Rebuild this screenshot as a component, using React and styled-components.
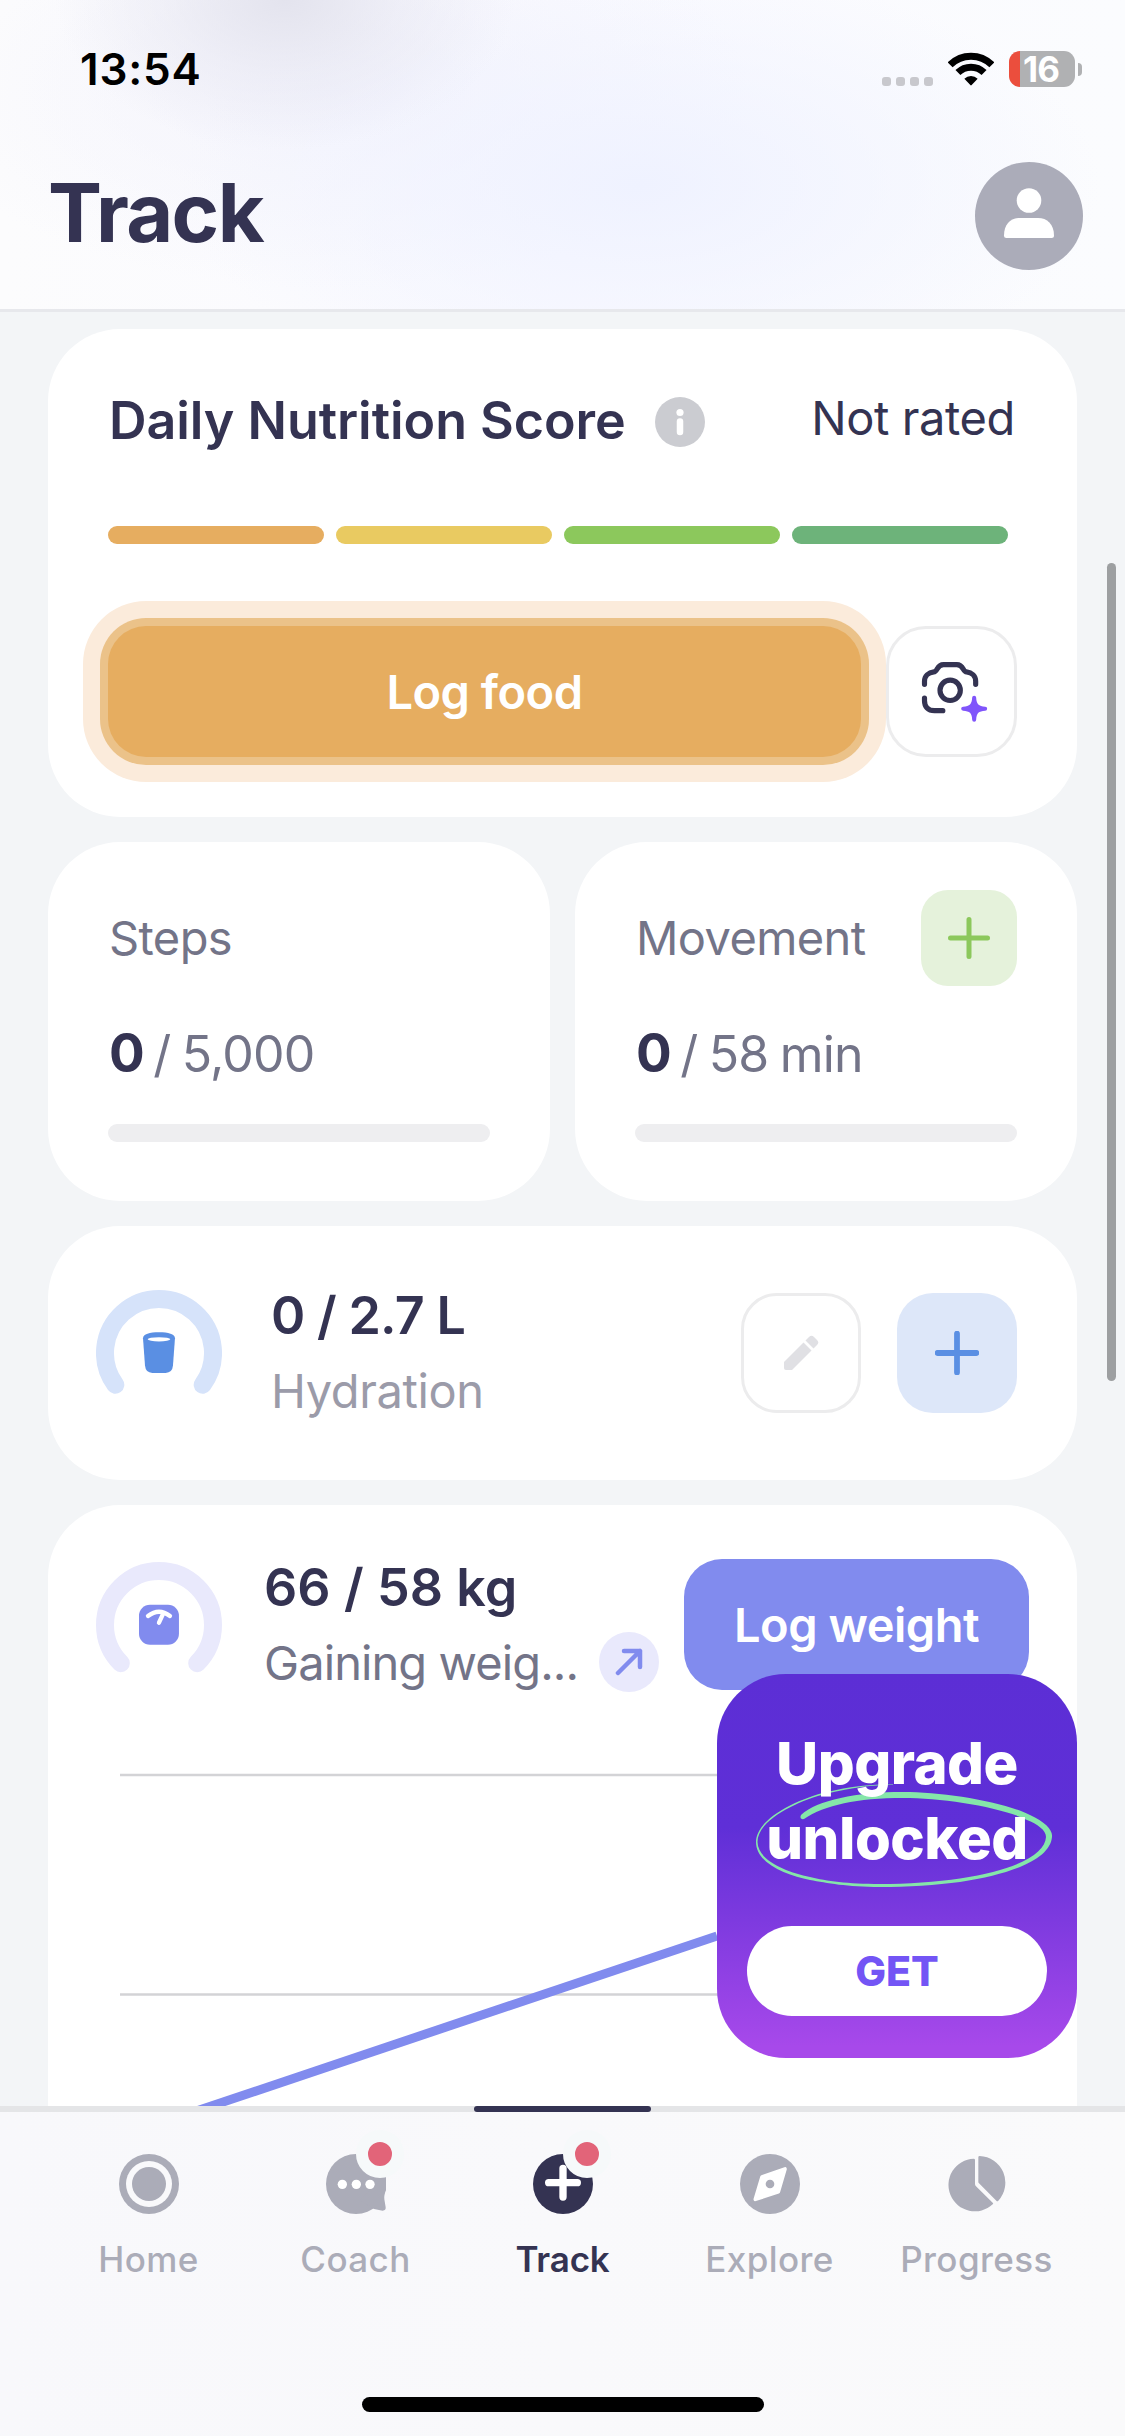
import React from 'react';
import styled, { createGlobalStyle } from 'styled-components';

const GlobalStyle = createGlobalStyle`
  * {
    box-sizing: border-box;
  }
  body {
    margin: 0;
    background-color: #f3f5f7;
    font-family: 'Inter', 'Liberation Sans', sans-serif;
    color: #343352;
  }
  svg {
    display: block;
    flex-shrink: 0;
  }
  button {
    border: none;
    padding: 0;
    font-family: inherit;
  }
`;

const Screen = styled.div`
  position: relative;
  display: flex;
  flex-direction: column;
  width: 1125px;
  height: 2436px;
  overflow: hidden;
`;

/* ---------- header ---------- */

const HeaderStyles = styled.header`
  height: 312px;
  border-bottom: 3px solid #e7e8ec;
  background: radial-gradient(
      ellipse 230px 150px at 285px 0,
      rgba(224, 224, 235, 0.85),
      rgba(226, 226, 238, 0.4) 50%,
      rgba(230, 230, 242, 0)
    ),
    radial-gradient(
      ellipse 460px 220px at 640px 185px,
      rgba(239, 242, 255, 1),
      rgba(239, 242, 255, 0)
    ),
    radial-gradient(
      ellipse 420px 200px at 330px 90px,
      rgba(243, 243, 252, 0.9),
      rgba(243, 243, 252, 0)
    ),
    linear-gradient(90deg, #fcfcfd, #fafaff 50%, #fbfcfe);

  .status {
    display: flex;
    align-items: center;
    height: 138px;
    padding: 0 43px 0 80px;
  }
  .time {
    flex: 1;
    font-size: 44px;
    font-weight: 600;
    letter-spacing: 0.8px;
    color: #000;
  }
  .title-row {
    display: flex;
    align-items: center;
    justify-content: space-between;
    height: 156px;
    padding: 0 42px 0 48px;
  }
  h1 {
    margin: 0;
    padding-bottom: 6px;
    font-size: 81px;
    line-height: 96px;
    font-weight: 700;
    letter-spacing: -1.6px;
  }
`;

const SignalDots = styled.div`
  display: flex;
  gap: 5px;
  margin: 24px 15px 0 0;

  span {
    width: 9px;
    height: 9px;
    border-radius: 3px;
    background-color: #c8c8cd;
  }
`;

const Battery = styled.div`
  width: 66px;
  height: 36px;
  margin: 0 3px 0 15px;
  border-radius: 11px;
  background: linear-gradient(90deg, #eb4e3d 11px, #b0b1b3 11px);
  color: #fff;
  font-size: 35px;
  line-height: 36px;
  font-weight: 700;
  text-align: center;
  letter-spacing: -1px;
  padding-right: 2px;
`;

const BatteryTip = styled.span`
  width: 4px;
  height: 13px;
  border-radius: 0 4px 4px 0;
  background-color: #b0b1b3;
`;

/* ---------- cards ---------- */

const Content = styled.main`
  display: flex;
  flex-direction: column;
  gap: 25px;
  flex: 1;
  min-height: 0;
  padding: 17px 48px 0;
  overflow: hidden;
`;

const Card = styled.section`
  flex-shrink: 0;
  border-radius: 72px;
  background-color: #fff;
`;

const NutritionCard = styled(Card)`
  padding: 60px;

  .heading {
    display: flex;
    align-items: center;
    height: 66px;
  }
  h2 {
    margin: 0 29px 3px 1px;
    font-size: 52px;
    font-weight: 600;
    letter-spacing: -0.05px;
    white-space: nowrap;
  }
  .rating {
    margin: 0 2px 10px auto;
    font-size: 47px;
    letter-spacing: -0.4px;
    white-space: nowrap;
  }
  .actions {
    display: flex;
    gap: 25px;
    margin-top: 82px;
  }
`;

const ScoreBar = styled.div`
  display: flex;
  gap: 12px;
  margin-top: 71px;
`;

const ScoreStep = styled.span`
  width: 216px;
  height: 18px;
  border-radius: 9px;
  background-color: ${(props) => props.$color};
`;

const Button = styled.button`
  height: 131px;
  border-radius: 38px;
  background-color: ${(props) => props.$color};
  color: #fff;
  font-size: 47px;
  font-weight: 600;
  letter-spacing: -0.5px;
  white-space: nowrap;
`;

const LogFoodButton = styled(Button)`
  flex: 1;
  box-shadow: 0 0 0 8px #ebc289, 0 0 0 25px #fbebdb;
`;

const IconButton = styled.button`
  display: flex;
  align-items: center;
  justify-content: center;
  flex-shrink: 0;
  width: ${(props) => props.$size}px;
  height: ${(props) => props.$size}px;
  border-radius: ${(props) => props.$radius || 36}px;
  background-color: ${(props) => props.$color || '#fff'};
  border: ${(props) => (props.$outline ? '3px solid #ececed' : 'none')};
`;

const CardPair = styled.div`
  display: grid;
  grid-template-columns: 1fr 1fr;
  gap: 25px;
  flex-shrink: 0;
`;

const StatCard = styled(Card)`
  padding: 48px 60px 59px;

  .label {
    display: flex;
    align-items: center;
    justify-content: space-between;
    height: 96px;
    font-size: 47px;
    letter-spacing: -0.6px;
    color: #737488;
  }
  .label span {
    padding: 0 0 2px 1px;
  }
  .value {
    margin: 37px 0 0 1px;
    font-size: 50px;
    line-height: 60px;
    letter-spacing: -0.8px;
    word-spacing: -2px;
    color: #737488;
    white-space: nowrap;
  }
  .value b {
    margin-right: -2px;
    font-size: 53px;
    font-weight: 700;
    color: #343352;
  }
  .bar {
    height: 18px;
    margin-top: 40px;
    border-radius: 9px;
    background-color: #eeeef0;
  }
`;

const GoalRow = styled.div`
  display: flex;
  align-items: center;
  height: ${(props) => props.$height}px;
`;

const GoalText = styled.div`
  margin-left: ${(props) => props.$indent}px;
  white-space: nowrap;

  .amount {
    font-size: 52px;
    line-height: 75px;
    font-weight: 600;
    letter-spacing: ${(props) => props.$amountSpacing};
  }
  .caption {
    display: flex;
    align-items: center;
    height: 75px;
    font-size: 47px;
    letter-spacing: ${(props) => props.$captionSpacing};
    color: ${(props) => props.$color};
  }
`;

const HydrationCard = styled(Card)`
  padding: 0 60px 0 48px;

  .buttons {
    display: flex;
    gap: 36px;
    margin-left: auto;
  }
`;

const WeightCard = styled(Card)`
  padding: 54px 0 90px;

  .top {
    padding: 0 48px;
  }
  ${Button} {
    width: 345px;
    margin-left: auto;
  }
`;

const TrendBadge = styled.span`
  display: flex;
  align-items: center;
  justify-content: center;
  width: 60px;
  height: 60px;
  margin-left: 21px;
  border-radius: 50%;
  background-color: #e9e9fc;
`;

/* ---------- overlays ---------- */

const Scrollbar = styled.div`
  position: absolute;
  top: 563px;
  right: 9px;
  width: 9px;
  height: 818px;
  border-radius: 5px;
  background-color: #9d9fa1;
`;

const Promo = styled.aside`
  position: absolute;
  right: 48px;
  bottom: 378px;
  width: 360px;
  height: 384px;
  padding-top: 52px;
  border-radius: 69px;
  background: linear-gradient(#5c2ed5, #5f2fd7 40%, #a749ea 97%);
  color: #fff;
  text-align: center;

  .scribble {
    position: absolute;
    top: 0;
    left: 0;
  }
  p {
    position: relative;
    margin: 0;
    font-size: 58px;
    line-height: 75px;
    font-weight: 800;
    letter-spacing: -0.5px;
  }
  button {
    width: 300px;
    height: 90px;
    margin-top: 50px;
    border-radius: 45px;
    background-color: #fff;
    color: #7355f5;
    font-size: 41px;
    font-weight: 800;
  }
`;

/* ---------- tab bar ---------- */

const TabBarStyles = styled.nav`
  display: flex;
  flex-direction: column;
  align-items: center;
  height: 330px;
  border-top: 6px solid #e4e5e7;
  background: linear-gradient(90deg, #f8f8fb, #fafafb);

  .tabs {
    display: grid;
    grid-template-columns: repeat(5, 207px);
  }
  .home-indicator {
    width: 402px;
    height: 15px;
    margin: auto 0 24px;
    border-radius: 8px;
    background-color: #000;
  }
`;

const Tab = styled.div`
  position: relative;
  display: flex;
  flex-direction: column;
  align-items: center;
  gap: 22px;
  padding-top: 42px;
  font-size: 35px;
  line-height: 46px;
  font-weight: ${(props) => (props.$active ? 600 : 500)};
  letter-spacing: ${(props) => (props.$active ? '-0.2px' : '0.4px')};
  color: ${(props) => (props.$active ? '#343352' : '#abacb8')};

  &::before {
    content: '';
    display: ${(props) => (props.$active ? 'block' : 'none')};
    position: absolute;
    top: -6px;
    width: 177px;
    height: 6px;
    border-radius: 3px;
    background-color: #343352;
  }
  .icon {
    position: relative;
  }
`;

const Dot = styled.span`
  position: absolute;
  top: -24px;
  right: -18px;
  width: 48px;
  height: 48px;
  border: 12px solid #f6f9fa;
  border-radius: 50%;
  background-color: #e26479;
`;

/* ---------- icons ---------- */

const WifiIcon = () => (
  <svg width="46" height="34" viewBox="264 64 138 102">
    <g fill="none" stroke="#000" strokeWidth="21">
      <path d="M270.4 102.4A88.5 88.5 0 0 1 395.6 102.4" />
      <path d="M293.8 125.8A55.5 55.5 0 0 1 372.2 125.8" />
    </g>
    <path d="M313 144A29 29 0 0 1 353 144L335 163Q333 165.5 331 163Z" />
  </svg>
);

const UserIcon = () => (
  <svg width="108" height="108" viewBox="0 0 108 108">
    <circle cx="54" cy="54" r="54" fill="#abacb9" />
    <circle cx="54" cy="38.500" r="12.300" fill="#fff" />
    <path
      d="M29 73.500C29 62 36 56 45 56H63C72 56 79 62 79 73.500Q79 76 76.500 76H31.500Q29 76 29 73.500Z"
      fill="#fff"
    />
  </svg>
);

const InfoIcon = () => (
  <svg width="50" height="50" viewBox="0 0 50 50">
    <circle cx="25" cy="25" r="25" fill="#cbccd1" />
    <circle cx="25" cy="15.500" r="3.600" fill="#fff" />
    <path d="M25 24.500V35" stroke="#fff" strokeWidth="6.500" strokeLinecap="round" />
  </svg>
);

const CameraIcon = () => (
  <svg width="76" height="76" viewBox="221.500 224 228 228">
    <g fill="none" stroke="#343352" strokeWidth="15.500" strokeLinecap="round">
      <path d="M253 315V306C253 290 265 279 281 277.500C293 277 289 256 310 256H350C371 256 367 277 379 277.500C395 279 406.500 290 406.500 306V315" />
      <path d="M253 356V364C253 382 263 394 283 394H308" />
      <circle cx="330" cy="333" r="30.500" />
    </g>
    <path
      d="M402 355C403 378 412 387 435 388C412 389 403 398 402 421C401 398 392 389 369 388C392 387 401 378 402 355Z"
      fill="#8055fb"
      stroke="#8055fb"
      strokeWidth="12"
      strokeLinejoin="round"
    />
  </svg>
);

const PlusIcon = ({ size, color, stroke }) => (
  <svg width={size} height={size} viewBox="0 0 42 42">
    <path
      d="M21 2.500V39.500M2.500 21H39.500"
      stroke={color}
      strokeWidth={stroke}
      strokeLinecap="round"
    />
  </svg>
);

const PencilIcon = () => (
  <svg width="36" height="36" viewBox="0 0 36 36" fill="#e0e0e4">
    <path d="M1 27L20.500 7.500L28.500 15.500L9 35H3Q1 35 1 33Z" />
    <path d="M22.500 5.500L26 2Q28.500 -0.500 31 2L34 5Q36.500 7.500 34 10L30.500 13.500Z" />
  </svg>
);

// open ring, `angle` is how far the ends drop below the middle
const Gauge = ({ angle, color, children }) => {
  const rad = (angle * Math.PI) / 180;
  const dx = 54 * Math.cos(rad);
  const y = 63 + 54 * Math.sin(rad);
  return (
    <svg width="126" height="126" viewBox="0 0 126 126">
      <path
        d={`M${63 - dx} ${y}A54 54 0 1 1 ${63 + dx} ${y}`}
        fill="none"
        stroke={color}
        strokeWidth="18"
        strokeLinecap="round"
      />
      {children}
    </svg>
  );
};

const CupShape = () => (
  <g transform="translate(47 42.300) scale(0.333)">
    <path
      d="M0 18C0 6 20 0 48 0S96 6 96 18L90 100Q88 122 68 122H28Q8 122 6 100Z"
      fill="#5a8fe3"
    />
    <ellipse cx="48" cy="21" rx="34" ry="6.500" fill="#fff" />
  </g>
);

const ScaleShape = () => (
  <g transform="translate(43 42.700) scale(0.333)">
    <rect width="120" height="120" rx="33" fill="#818bee" />
    <path
      d="M27 34Q60 8 93 34M60 54L74 24"
      fill="none"
      stroke="#fff"
      strokeWidth="13"
      strokeLinecap="round"
    />
  </g>
);

const ArrowIcon = () => (
  <svg width="28" height="28" viewBox="0 0 28 28">
    <path
      d="M3 25L25 3M9 3H25V19"
      fill="none"
      stroke="#818bee"
      strokeWidth="4.500"
      strokeLinecap="round"
      strokeLinejoin="round"
    />
  </svg>
);

const WeightChart = () => (
  <svg width="1029" height="440" viewBox="0 0 1029 440">
    <path d="M72 85H957M72 304.500H957" stroke="#d3d3d6" strokeWidth="2.500" />
    <path d="M74 446L669 246" stroke="#818bee" strokeWidth="9" />
  </svg>
);

const Scribble = () => (
  <svg className="scribble" width="360" height="384" viewBox="0 0 360 384">
    <path
      d="M84 141C100 126 140 118 186 118C226 118 284 127 313 141C328 148 336 156 335 163C333 184 300 199 243 208C220 211 190 213 163 213C130 213 110 209 93 206C70 201 39 190 39 168C39 145 80 125 110 118C135 112 155 110 176 110.500L176 111C155 111 135 113.500 110 119.500C80 127 40.500 146 40.500 168C41 187 70 198 93 203C110 207 130 210 163 210C190 210 220 208 243 204.500C300 196 328 180 329 163C329 156 320 150 310 146C284 133 226 124 186 124C140 124 108 131 87 145Q82 146 84 141Z"
      fill="#85e6a9"
    />
  </svg>
);

const HomeIcon = () => (
  <svg width="60" height="60" viewBox="0 0 60 60" fill="#abacb8">
    <circle cx="30" cy="30" r="30" />
    <circle cx="30" cy="30" r="23" fill="#f9f9fb" />
    <circle cx="30" cy="30" r="17" />
  </svg>
);

const CoachIcon = () => (
  <svg width="60" height="60" viewBox="138 102 180 180" fill="#abacb8">
    <circle cx="228" cy="192" r="90" />
    <path d="M318 165V210Q311 228 313 238L317 262Q318 272 308 272L282 267L240 240Z" />
    <g fill="#fff">
      <circle cx="187" cy="193" r="14" />
      <circle cx="229" cy="193" r="14" />
      <circle cx="270" cy="193" r="14" />
    </g>
  </svg>
);

const TrackIcon = () => (
  <svg width="60" height="60" viewBox="759 102 180 180">
    <circle cx="849" cy="192" r="90" fill="#343352" />
    <path
      d="M849 145V231M806 188H892"
      stroke="#fff"
      strokeWidth="22"
      strokeLinecap="round"
    />
    <path d="M832 188L849 171L866 188L849 205Z" fill="#fff" />
  </svg>
);

const ExploreIcon = () => (
  <svg width="60" height="60" viewBox="60 71 180 180" fill="#abacb8">
    <circle cx="150" cy="161" r="90" />
    <path
      d="M195 116L175 184L106 207L126 140Z"
      fill="#fff"
      stroke="#fff"
      strokeWidth="11"
      strokeLinejoin="round"
    />
    <circle cx="150" cy="161" r="13" />
  </svg>
);

const ProgressIcon = () => (
  <svg width="60" height="60" viewBox="681 72 180 180" fill="#abacb8">
    <path d="M765 90Q765 86 761 86A79 79 0 1 0 818 223Q821 221 818 218L768 169Q765 166 765 162Z" />
    <path d="M775 82Q775 78 779 78A80 80 0 0 1 835 212Q832 215 829 212L777 160Q775 158 775 155Z" />
  </svg>
);

const scoreColors = ['#e6ad60', '#e9ca61', '#8cc85c', '#6db37a'];

const tabs = [
  { label: 'Home', Icon: HomeIcon },
  { label: 'Coach', Icon: CoachIcon, dot: true },
  { label: 'Track', Icon: TrackIcon, dot: true, active: true },
  { label: 'Explore', Icon: ExploreIcon },
  { label: 'Progress', Icon: ProgressIcon },
];

function Header() {
  return (
    <HeaderStyles>
      <div className="status">
        <span className="time">13:54</span>
        <SignalDots>
          <span />
          <span />
          <span />
          <span />
        </SignalDots>
        <WifiIcon />
        <Battery>16</Battery>
        <BatteryTip />
      </div>
      <div className="title-row">
        <h1>Track</h1>
        <UserIcon />
      </div>
    </HeaderStyles>
  );
}

function Stat({ label, goal, action }) {
  return (
    <StatCard>
      <div className="label">
        <span>{label}</span>
        {action}
      </div>
      <div className="value">
        <b>0</b> / {goal}
      </div>
      <div className="bar" />
    </StatCard>
  );
}

function TabBar() {
  return (
    <TabBarStyles>
      <div className="tabs">
        {tabs.map(({ label, Icon, dot, active }) => (
          <Tab key={label} $active={active}>
            <div className="icon">
              <Icon />
              {dot && <Dot />}
            </div>
            {label}
          </Tab>
        ))}
      </div>
      <div className="home-indicator" />
    </TabBarStyles>
  );
}

export default function App() {
  return (
    <>
      <GlobalStyle />
      <Screen>
        <Header />
        <Content>
          <NutritionCard>
            <div className="heading">
              <h2>Daily Nutrition Score</h2>
              <InfoIcon />
              <span className="rating">Not rated</span>
            </div>
            <ScoreBar>
              {scoreColors.map((color) => (
                <ScoreStep key={color} $color={color} />
              ))}
            </ScoreBar>
            <div className="actions">
              <LogFoodButton $color="#e6ad60">Log food</LogFoodButton>
              <IconButton $size={131} $radius={40} $outline>
                <CameraIcon />
              </IconButton>
            </div>
          </NutritionCard>

          <CardPair>
            <Stat label="Steps" goal="5,000" />
            <Stat
              label="Movement"
              goal="58 min"
              action={
                <IconButton $size={96} $radius={27} $color="#e5f2db">
                  <PlusIcon size={42} color="#8cc85c" stroke={5} />
                </IconButton>
              }
            />
          </CardPair>

          <HydrationCard>
            <GoalRow $height={254}>
              <Gauge angle={36} color="#d6e3fa">
                <CupShape />
              </Gauge>
              <GoalText
                $indent={49}
                $color="#9b9ba9"
                $amountSpacing="-0.7px"
                $captionSpacing="-0.4px"
              >
                <div className="amount">0 / 2.7 L</div>
                <div className="caption">Hydration</div>
              </GoalText>
              <div className="buttons">
                <IconButton $size={120} $outline>
                  <PencilIcon />
                </IconButton>
                <IconButton $size={120} $color="#dde7f9">
                  <PlusIcon size={44} color="#5a8fe3" stroke={5.5} />
                </IconButton>
              </div>
            </GoalRow>
          </HydrationCard>

          <WeightCard>
            <GoalRow className="top" $height={131}>
              <Gauge angle={45} color="#e9e9fc">
                <ScaleShape />
              </Gauge>
              <GoalText
                $indent={42}
                $color="#737488"
                $amountSpacing="0.1px"
                $captionSpacing="-0.9px"
              >
                <div className="amount">66 / 58 kg</div>
                <div className="caption">
                  Gaining weig...
                  <TrendBadge>
                    <ArrowIcon />
                  </TrendBadge>
                </div>
              </GoalText>
              <Button $color="#818bee">Log weight</Button>
            </GoalRow>
            <WeightChart />
          </WeightCard>
        </Content>
        <TabBar />

        <Scrollbar />
        <Promo>
          <Scribble />
          <p>
            Upgrade
            <br />
            unlocked
          </p>
          <button>GET</button>
        </Promo>
      </Screen>
    </>
  );
}
